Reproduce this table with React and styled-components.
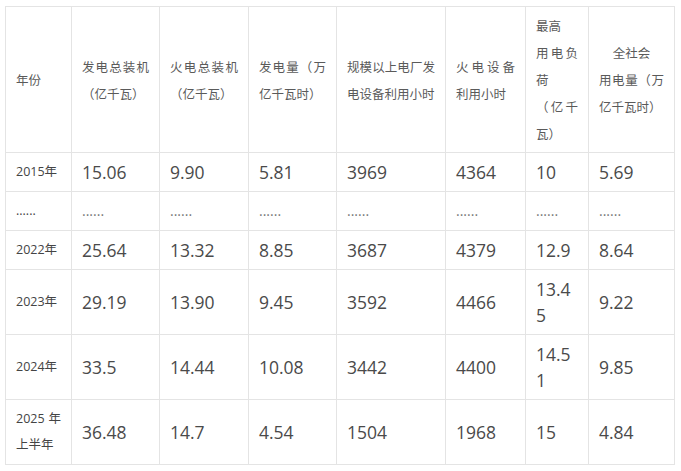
import styled, { createGlobalStyle } from "styled-components";

const GlobalStyle = createGlobalStyle`
  body {
    margin: 0;
    background: #fff;
    font-family: "Open Sans", "Noto Sans CJK SC", sans-serif;
  }
`;

const widths = [66, 88, 89, 88, 109, 80, 63, 86];

const rows = [
  ["2015年", "15.06", "9.90", "5.81", "3969", "4364", "10", "5.69"],
  ["......", "......", "......", "......", "......", "......", "......", "......"],
  ["2022年", "25.64", "13.32", "8.85", "3687", "4379", "12.9", "8.64"],
  ["2023年", "29.19", "13.90", "9.45", "3592", "4466", "13.45", "9.22"],
  ["2024年", "33.5", "14.44", "10.08", "3442", "4400", "14.51", "9.85"],
  ["2025年上半年", "36.48", "14.7", "4.54", "1504", "1968", "15", "4.84"],
];

const App = () => {
  return (
    <>
      <GlobalStyle />
      <Table>
        <colgroup>
          {widths.map((w, i) => (
            <col key={i} style={{ width: w }} />
          ))}
        </colgroup>
        <thead>
          <tr>
            <HeadCell>年份</HeadCell>
            <HeadCell>发电总装机（亿千瓦）</HeadCell>
            <HeadCell>火电总装机（亿千瓦）</HeadCell>
            <HeadCell>发电量（万亿千瓦时）</HeadCell>
            <HeadCell>规模以上电厂发电设备利用小时</HeadCell>
            <HeadCell>火电设备利用小时</HeadCell>
            <HeadCell>
              最高
              <br />
              用电负荷
              <br />
              （亿千瓦）
            </HeadCell>
            <HeadCell>
              <Centered>全社会</Centered>
              用电量（万亿千瓦时）
            </HeadCell>
          </tr>
        </thead>
        <tbody>
          {rows.map((row, r) => (
            <tr key={r}>
              {row.map((value, c) =>
                c === 0 ? (
                  <YearCell key={c}>{value}</YearCell>
                ) : (
                  <NumCell key={c} $dots={value === "......"}>
                    {value}
                  </NumCell>
                )
              )}
            </tr>
          ))}
        </tbody>
      </Table>
    </>
  );
};

export default App;

const Table = styled.table`
  margin: 6px 0 0 5px;
  width: 669px;
  table-layout: fixed;
  border-collapse: collapse;
  color: #4a4a4a;
`;

const Cell = styled.td`
  border: 1px solid #e4e4e4;
  padding: 6px 10px;
  vertical-align: middle;
  text-align: justify;
  word-break: break-all;
`;

const HeadCell = styled(Cell).attrs({ as: "th" })`
  padding: 5px 10px;
  font-family: "Noto Sans CJK SC", sans-serif;
  font-size: 12.5px;
  font-weight: 400;
  line-height: 27px;
  color: #5a5a5a;
`;

const Centered = styled.div`
  text-align: center;
`;

const YearCell = styled(Cell)`
  font-size: 12.5px;
  line-height: 26px;
  word-break: normal;
  color: #444;
`;

const NumCell = styled(Cell)`
  font-size: ${({ $dots }) => ($dots ? "14px" : "17.5px")};
  line-height: 26px;
  color: ${({ $dots }) => ($dots ? "#777" : "#4a4a4a")};
`;
